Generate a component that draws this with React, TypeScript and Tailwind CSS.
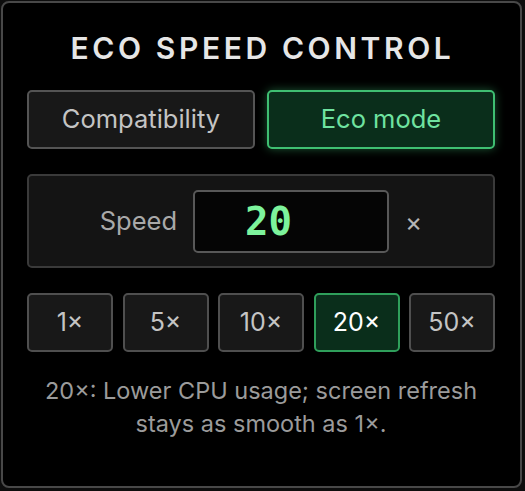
/**
 * Eco speed control panel
 * Mode toggle, numeric speed readout and preset multipliers
 */

import React, { useState } from 'react';

const presets = [1, 5, 10, 20, 50];

const sans = "font-['Inter','Liberation_Sans',sans-serif]";

const App: React.FC = () => {
  const [mode, setMode] = useState<'compat' | 'eco'>('eco');
  const [speed, setSpeed] = useState(20);

  return (
    <div className={`min-h-screen bg-[#0d0d0d] p-px ${sans}`}>
      <div className="w-[521px] h-[487px] rounded-lg border-2 border-[#484848] bg-black pl-6 pr-[25px] pt-[27px] flex flex-col">
        {/* Title */}
        <h1 className="text-center text-[30px] leading-[36px] font-semibold tracking-[3.6px] text-[#e6e6e6] pl-[3px]">
          ECO SPEED CONTROL
        </h1>

        {/* Mode toggle */}
        <div className="mt-6 grid grid-cols-2 gap-3">
          <button
            onClick={() => setMode('compat')}
            className={`h-[59px] rounded-[5px] border-2 text-[25.5px] ${
              mode === 'compat'
                ? 'border-[#3fbf72] bg-[#0a2e1b] text-[#6fe3a0] shadow-[0_0_10px_rgba(63,191,114,0.45)]'
                : 'border-[#545454] bg-[#181818] text-[#c4c4c4]'
            }`}
          >
            Compatibility
          </button>
          <button
            onClick={() => setMode('eco')}
            className={`h-[59px] rounded-[5px] border-2 text-[25.5px] ${
              mode === 'eco'
                ? 'border-[#3fbf72] bg-[#0a2e1b] text-[#6fe3a0] shadow-[0_0_10px_rgba(63,191,114,0.45)]'
                : 'border-[#545454] bg-[#181818] text-[#c4c4c4]'
            }`}
          >
            Eco mode
          </button>
        </div>

        {/* Speed readout */}
        <div className="mt-[25px] h-[94px] rounded-[5px] border-2 border-[#3a3a3a] bg-[#141414] flex items-center justify-center gap-4">
          <span className="text-[25.5px] text-[#a9a9a9]">Speed</span>
          <div className="w-[196px] shrink-0 h-[63px] rounded-[5px] border-2 border-[#585858] bg-[#050505] flex items-center pl-[50px]">
            <span className="font-['DejaVu_Sans_Mono',monospace] text-[39px] leading-none font-bold text-[#7df39c]">
              {speed}
            </span>
          </div>
          <span className="text-[26px] text-[#b5b5b5]">×</span>
        </div>

        {/* Presets */}
        <div className="mt-[25px] grid grid-cols-5 gap-[9.5px]">
          {presets.map((p) => (
            <button
              key={p}
              onClick={() => setSpeed(p)}
              className={`h-[59px] rounded-[5px] border-2 text-[25px] ${
                speed === p
                  ? 'border-[#2f9f5b] bg-[#0a2e1b] text-white'
                  : 'border-[#4f4f4f] bg-[#181818] text-[#c4c4c4]'
              }`}
            >
              {p}×
            </button>
          ))}
        </div>

        {/* Hint */}
        <p className="mt-[22px] px-2 text-center text-[23.5px] leading-[33px] text-[#9b9b9b]">
          {speed}×: Lower CPU usage; screen refresh stays as smooth as 1×.
        </p>
      </div>
    </div>
  );
};

export default App;
